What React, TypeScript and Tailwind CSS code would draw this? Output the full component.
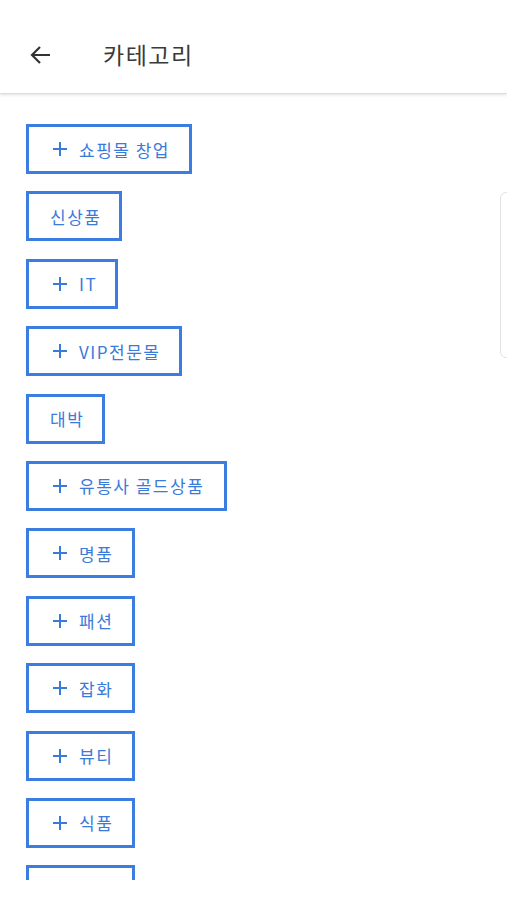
import React from "react";

const items: { label: string; plus: boolean; w: string }[] = [
  { label: "쇼핑몰 창업", plus: true, w: "w-[166px]" },
  { label: "신상품", plus: false, w: "w-[96px]" },
  { label: "IT", plus: true, w: "w-[92px]" },
  { label: "VIP전문몰", plus: true, w: "w-[156px]" },
  { label: "대박", plus: false, w: "w-[79px]" },
  { label: "유통사 골드상품", plus: true, w: "w-[201px]" },
  { label: "명품", plus: true, w: "w-[109px]" },
  { label: "패션", plus: true, w: "w-[109px]" },
  { label: "잡화", plus: true, w: "w-[109px]" },
  { label: "뷰티", plus: true, w: "w-[109px]" },
  { label: "식품", plus: true, w: "w-[109px]" },
  { label: "", plus: false, w: "w-[109px]" },
];

function Plus() {
  return (
    <svg width="14" height="14" viewBox="0 0 14 14" className="shrink-0">
      <path d="M7 0v14M0 7h14" stroke="#3a7ad9" strokeWidth="2" fill="none" />
    </svg>
  );
}

export default function App() {
  return (
    <div
      className="relative w-[507px] h-[900px] bg-white overflow-hidden"
      style={{ fontFamily: '"Noto Sans CJK KR", "Noto Sans", sans-serif' }}
    >
      <header className="h-[94px] flex items-center pt-[16px] border-b border-[#dcdcdc] shadow-[0_1px_3px_rgba(0,0,0,0.12)] relative z-10 bg-white">
        <div className="w-[103px] flex items-center pl-[29px]">
          <svg width="22" height="22" viewBox="0 0 22 22">
            <path
              d="M21 11H3M11 3l-8 8 8 8"
              stroke="#333"
              strokeWidth="2.2"
              fill="none"
              strokeLinecap="butt"
            />
          </svg>
        </div>
        <h1 className="text-[23px] text-[#3a3a3a] leading-none tracking-[1.5px]">카테고리</h1>
      </header>
      <div className="h-[786px] overflow-hidden pt-[30px] pl-[26px]">
        <div className="flex flex-col gap-[17.4px]">
          {items.map((it, i) => (
            <div
              key={i}
              className={`${it.w} h-[50px] shrink-0 border-[3px] border-[#3c7de0] flex items-center ${it.plus ? "pl-[24px]" : "pl-[21px]"} gap-[12px] text-[17px] text-[#3a7ad9] leading-none tracking-[1.5px]`}
            >
              {it.plus && <Plus />}
              {it.label && <span className="whitespace-nowrap">{it.label}</span>}
            </div>
          ))}
        </div>
      </div>
      <div className="absolute left-[500px] top-[192px] w-[20px] h-[166px] border border-[#e2e2e2] rounded-l-[6px] bg-white" />
    </div>
  );
}
